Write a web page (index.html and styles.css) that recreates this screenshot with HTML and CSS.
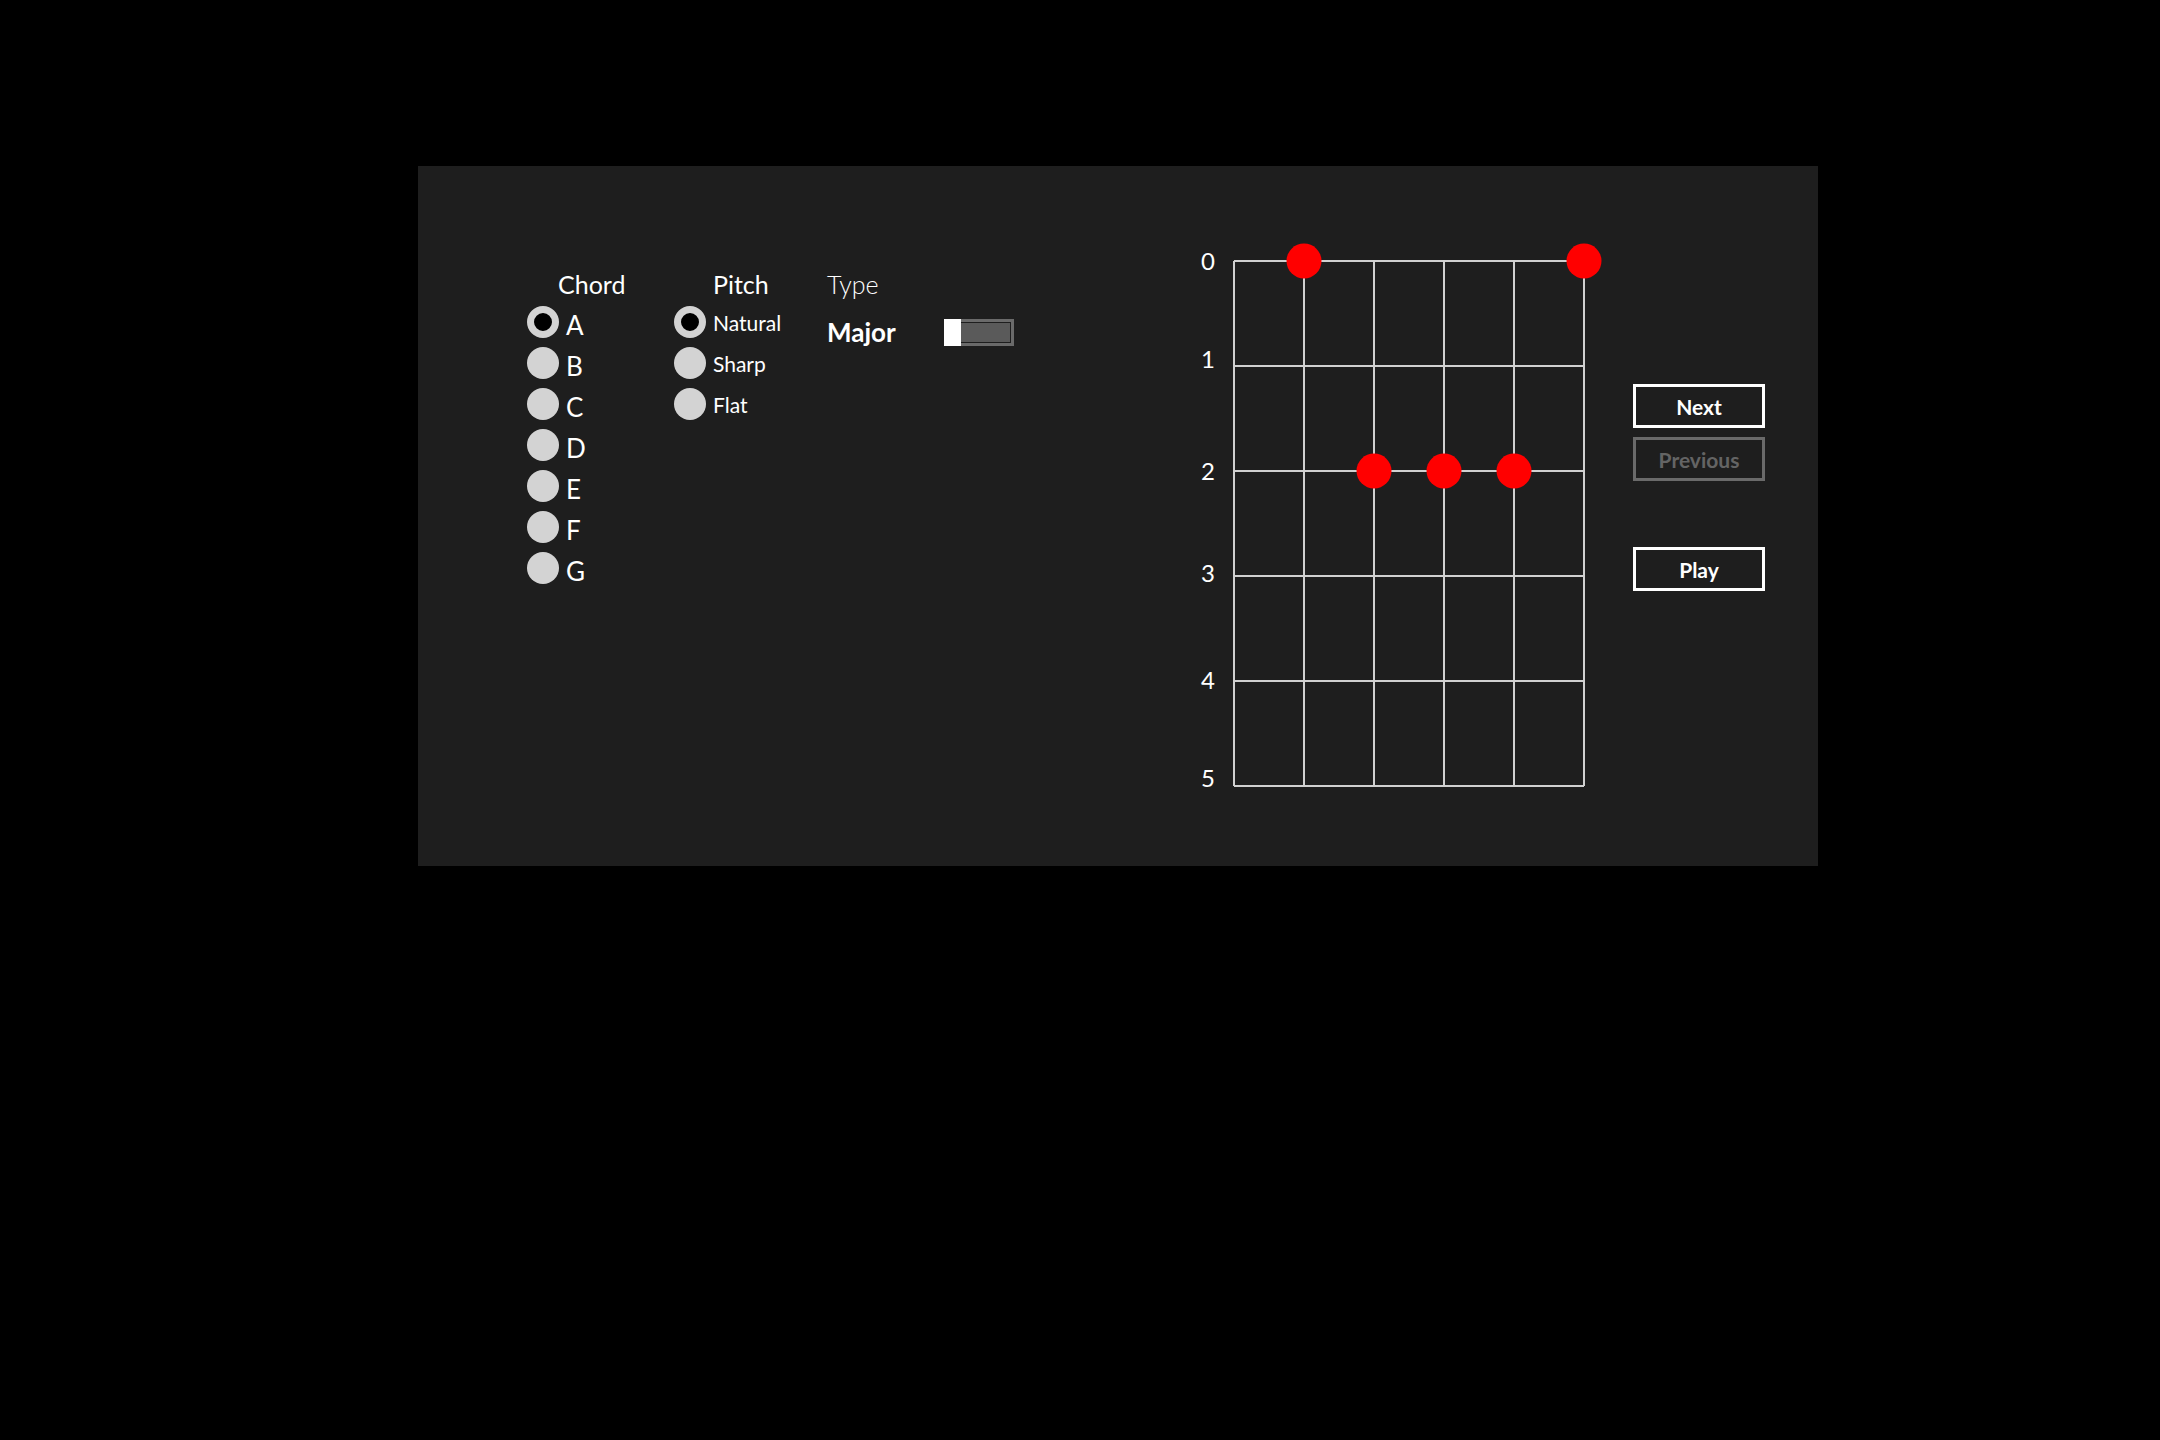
FILE: index.html
```html
<!DOCTYPE html>
<html lang="en">
<head>
<meta charset="utf-8">
<title>Chord Finder</title>
<link rel="stylesheet" href="styles.css">
</head>
<body>
<main class="panel">
  <section class="options">
    <div class="col col-chord">
      <div class="col-head head-chord">Chord</div>
      <label class="opt opt-chord"><input type="radio" name="chord" class="radio" checked><span>A</span></label>
      <label class="opt opt-chord"><input type="radio" name="chord" class="radio"><span>B</span></label>
      <label class="opt opt-chord"><input type="radio" name="chord" class="radio"><span>C</span></label>
      <label class="opt opt-chord"><input type="radio" name="chord" class="radio"><span>D</span></label>
      <label class="opt opt-chord"><input type="radio" name="chord" class="radio"><span>E</span></label>
      <label class="opt opt-chord"><input type="radio" name="chord" class="radio"><span>F</span></label>
      <label class="opt opt-chord"><input type="radio" name="chord" class="radio"><span>G</span></label>
    </div>
    <div class="col col-pitch">
      <div class="col-head head-pitch">Pitch</div>
      <label class="opt opt-pitch"><input type="radio" name="pitch" class="radio" checked><span>Natural</span></label>
      <label class="opt opt-pitch"><input type="radio" name="pitch" class="radio"><span>Sharp</span></label>
      <label class="opt opt-pitch"><input type="radio" name="pitch" class="radio"><span>Flat</span></label>
    </div>
    <div class="col col-type">
      <div class="col-head head-type">Type</div>
      <div class="type-row">
        <span class="type-value">Major</span>
        <span class="toggle"><span class="toggle-thumb"></span></span>
      </div>
    </div>
  </section>

  <svg class="fretboard" width="420" height="570" viewBox="0 0 420 570" xmlns="http://www.w3.org/2000/svg">
    <g class="frets" stroke="#d0d0d0" stroke-width="2">
      <line x1="44" y1="25" x2="394" y2="25"/>
      <line x1="44" y1="130" x2="394" y2="130"/>
      <line x1="44" y1="235" x2="394" y2="235"/>
      <line x1="44" y1="340" x2="394" y2="340"/>
      <line x1="44" y1="445" x2="394" y2="445"/>
      <line x1="44" y1="550" x2="394" y2="550"/>
      <line x1="44" y1="25" x2="44" y2="550"/>
      <line x1="114" y1="25" x2="114" y2="550"/>
      <line x1="184" y1="25" x2="184" y2="550"/>
      <line x1="254" y1="25" x2="254" y2="550"/>
      <line x1="324" y1="25" x2="324" y2="550"/>
      <line x1="394" y1="25" x2="394" y2="550"/>
    </g>
    <g class="fret-nums" fill="#ffffff" font-family="Lato, 'Open Sans', sans-serif" font-size="24" text-anchor="middle">
      <text x="18" y="34">0</text>
      <text x="18" y="132">1</text>
      <text x="18" y="244">2</text>
      <text x="18" y="346">3</text>
      <text x="18" y="453">4</text>
      <text x="18" y="551">5</text>
    </g>
    <g class="notes" fill="#ff0000">
      <circle cx="114" cy="25" r="17.5"/>
      <circle cx="394" cy="25" r="17.5"/>
      <circle cx="184" cy="235" r="17.5"/>
      <circle cx="254" cy="235" r="17.5"/>
      <circle cx="324" cy="235" r="17.5"/>
    </g>
  </svg>

  <nav class="actions">
    <button class="btn">Next</button>
    <button class="btn btn-disabled" disabled>Previous</button>
    <button class="btn btn-play">Play</button>
  </nav>
</main>
</body>
</html>
```
FILE: styles.css
```css
html, body {
  margin: 0;
  padding: 0;
  background: #000000;
}

body {
  width: 2160px;
  height: 1440px;
  font-family: Lato, "Open Sans", sans-serif;
  color: #ffffff;
}

.panel {
  margin: 166px 0 0 418px;
  width: 1400px;
  height: 700px;
  background: #1e1e1e;
  display: flex;
  align-items: flex-start;
}

.options {
  display: flex;
  margin: 101px 0 0 109px;
}

.col {
  display: flex;
  flex-direction: column;
}

.col-chord { width: 147px; }
.col-pitch { width: 153px; }
.col-type { width: 363px; }

.col-head {
  font-size: 25px;
  line-height: 34px;
  height: 34px;
  margin-bottom: 0.5px;
}

.head-chord { padding-left: 31px; }
.head-pitch { padding-left: 39px; }
.head-type { font-weight: 300; }

.opt {
  display: flex;
  align-items: center;
  height: 41px;
}

.radio {
  appearance: none;
  -webkit-appearance: none;
  margin: 0 7px 0 0;
  width: 32px;
  height: 32px;
  border-radius: 50%;
  background: #d3d3d3;
  box-sizing: border-box;
  flex: none;
}

.radio:checked {
  border: 7px solid #d3d3d3;
  background: #000000;
}

.opt-chord span {
  font-size: 26px;
  line-height: 41px;
  margin-top: 6px;
}

.opt-pitch span {
  font-size: 21px;
  line-height: 41px;
}

.type-row {
  display: flex;
  align-items: center;
  height: 41px;
  margin-top: 10px;
}

.type-value {
  width: 117px;
  font-size: 26px;
  font-weight: 700;
  line-height: 41px;
}

.toggle {
  position: relative;
  width: 70px;
  height: 27px;
  box-sizing: border-box;
  border: 3px solid #6a6a6a;
  background: #5a5a5a;
  box-shadow: inset 0 0 0 1px #1e1e1e;
}

.toggle-thumb {
  position: absolute;
  left: -3px;
  top: -3px;
  width: 17px;
  height: 27px;
  background: #ffffff;
}

.fretboard {
  display: block;
  margin-top: 70px;
}

.actions {
  display: flex;
  flex-direction: column;
  margin: 218px 0 0 23px;
}

.btn {
  width: 132px;
  height: 44px;
  box-sizing: border-box;
  border: 3px solid #ffffff;
  background: transparent;
  color: #ffffff;
  font-family: Lato, "Open Sans", sans-serif;
  font-size: 21px;
  font-weight: 700;
  padding: 0;
  margin: 0 0 9px 0;
}

.btn-disabled {
  border-color: #6a6a6a;
  color: #646464;
}

.btn-play {
  margin-top: 57px;
}
```
